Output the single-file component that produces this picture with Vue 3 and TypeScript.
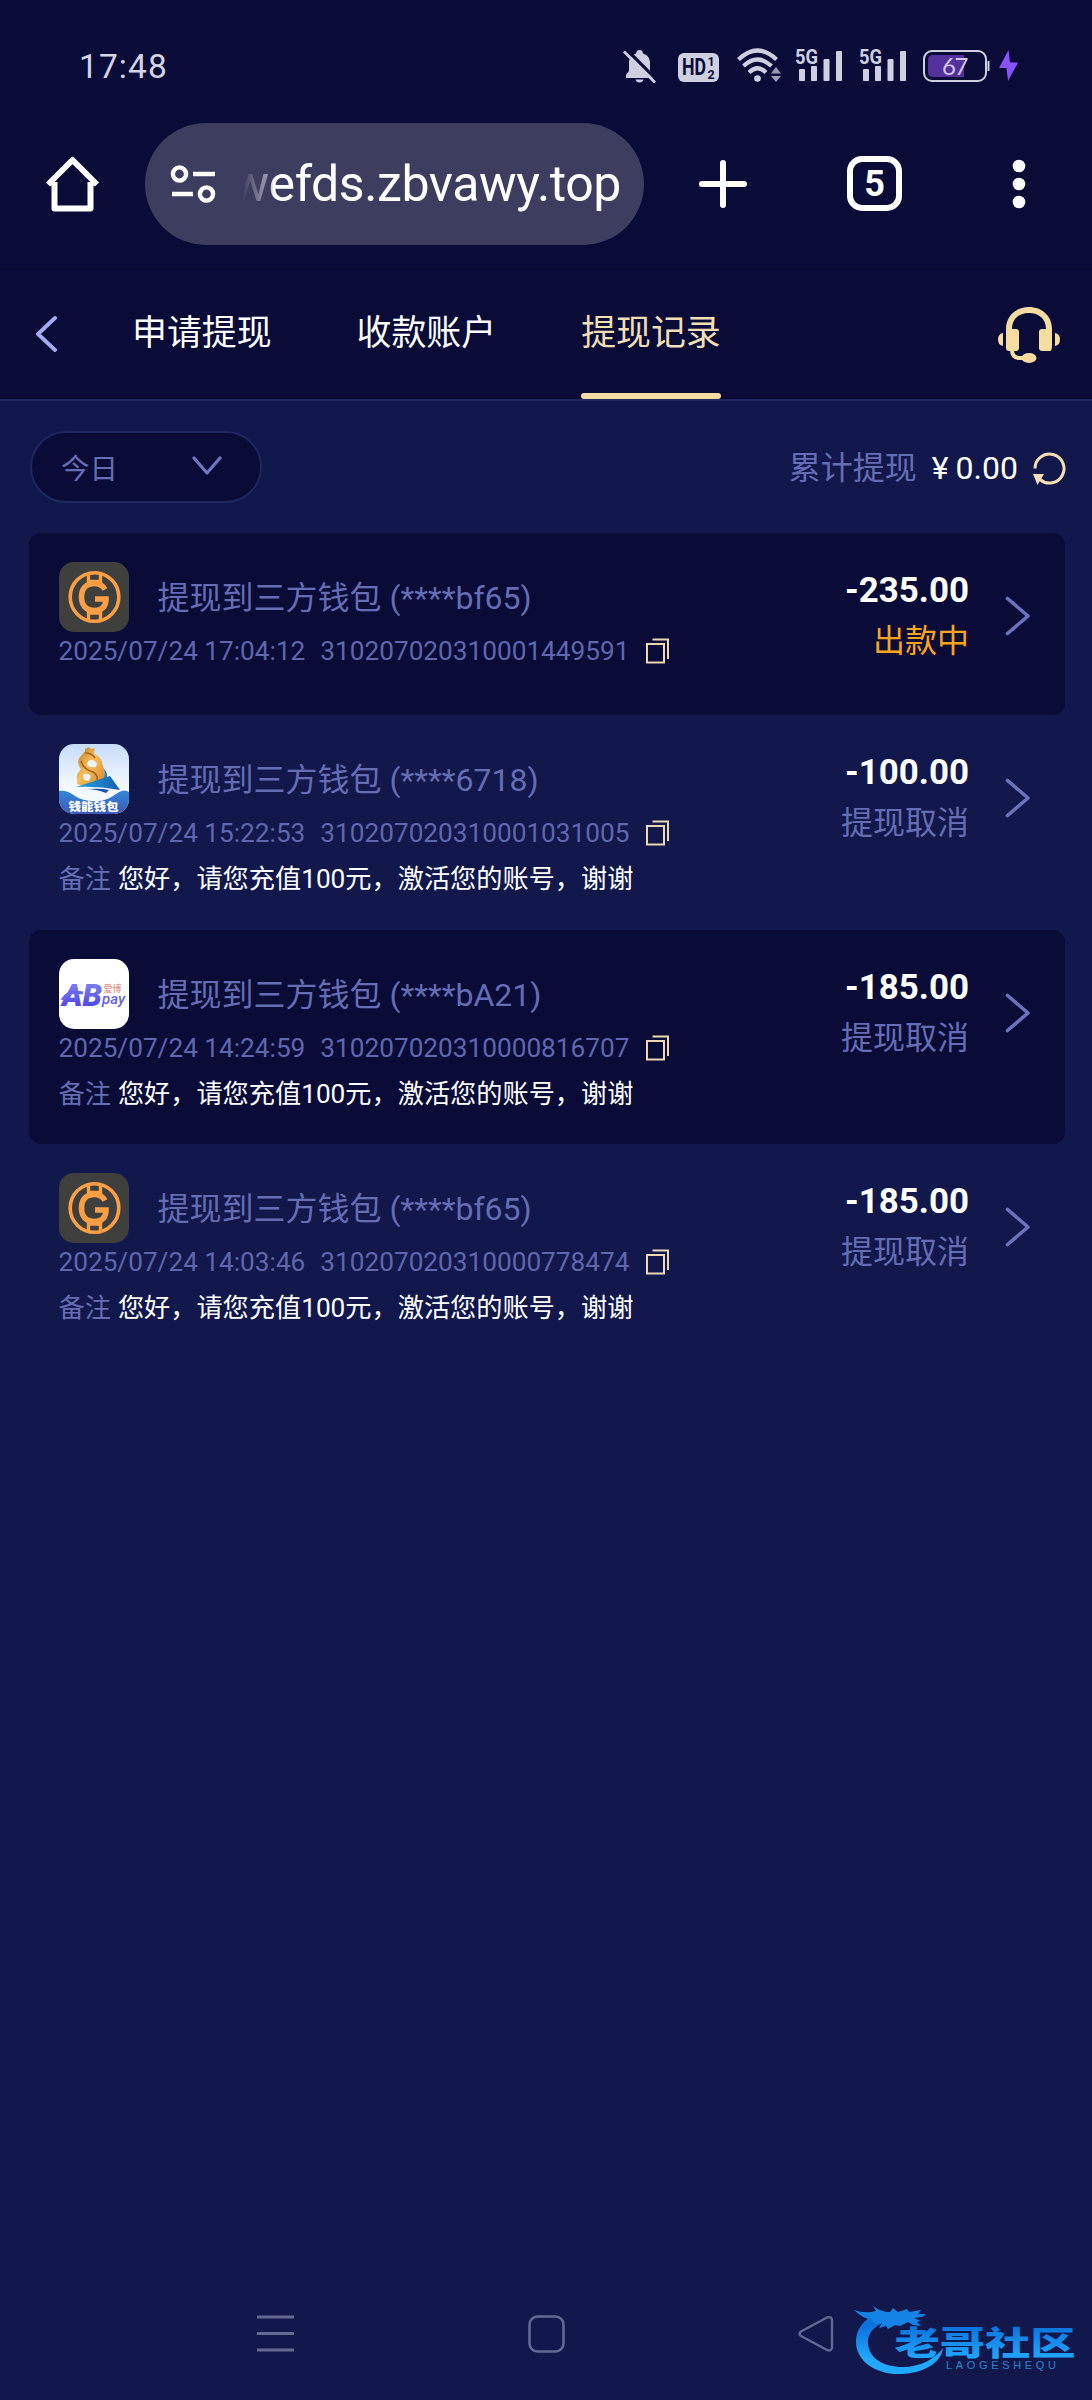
<script setup lang="ts">
interface WithdrawRecord {
  logo: 'coin' | 'boat' | 'ab'
  tail: string
  time: string
  order: string
  amount: string
  status: string
  pending?: boolean
  remark?: string
}

const tabs: string[] = ['申请提现', '收款账户', '提现记录']
const activeTab = 2
const remark = '您好，请您充值100元，激活您的账号，谢谢'

const records: WithdrawRecord[] = [
  { logo: 'coin', tail: 'bf65', time: '2025/07/24 17:04:12', order: '310207020310001449591', amount: '-235.00', status: '出款中', pending: true },
  { logo: 'boat', tail: '6718', time: '2025/07/24 15:22:53', order: '310207020310001031005', amount: '-100.00', status: '提现取消', remark },
  { logo: 'ab', tail: 'bA21', time: '2025/07/24 14:24:59', order: '310207020310000816707', amount: '-185.00', status: '提现取消', remark },
  { logo: 'coin', tail: 'bf65', time: '2025/07/24 14:03:46', order: '310207020310000778474', amount: '-185.00', status: '提现取消', remark },
]
</script>

<template>
  <div class="screen">
    <header class="status-bar">
      <span class="clock">17:48</span>
      <div class="status-icons">
        <svg class="bell" width="34" height="34" viewBox="0 0 34 34">
          <path d="M3 28v-3l3-4v-8c0-5 3-8 7-9.500c.5-2 1-3.500 3.500-3.500s3 1.500 3.500 3.500c4.500 1.500 7 4.500 7 9.500v8l3 4v3z" fill="#cfcfe2" />
          <path d="M12.500 29.500h8c-.5 2-2 3-4 3s-3.500-1-4-3z" fill="#cfcfe2" />
          <path d="M3 -1L36 32" stroke="#0a0b37" stroke-width="3.200" />
          <path d="M1 1.500L32 32.500" stroke="#cfcfe2" stroke-width="2.800" />
        </svg>
        <svg class="hd" width="41" height="29" viewBox="0 0 41 29">
          <rect width="41" height="29" rx="6" fill="#cfcfe2" />
          <text x="4" y="22" class="hd-text" textLength="24" lengthAdjust="spacingAndGlyphs">HD</text>
          <text x="29.500" y="13" class="hd-num">1</text>
          <text x="29.500" y="25.500" class="hd-num">2</text>
        </svg>
        <svg class="wifi" width="45" height="35" viewBox="0 0 45 35">
          <g fill="none" stroke="#cfcfe2" stroke-width="4.200">
            <path d="M1.500 11.500Q20.500-6.500 39.500 11.500" />
            <path d="M6.500 18Q20.500 5 34.500 18" />
            <path d="M12 24.500Q20.500 16 29 24.500" />
          </g>
          <circle cx="20.500" cy="30.500" r="3.300" fill="#cfcfe2" />
          <path d="M39 19l5 6.500h-10zM39 34l5-6h-10z" fill="#9c9cb8" />
        </svg>
        <svg v-for="n in 2" :key="n" class="signal" width="48" height="34" viewBox="0 0 48 34">
          <text x="0" y="15.500" class="net" textLength="23" lengthAdjust="spacingAndGlyphs">5G</text>
          <g fill="#cfcfe2">
            <rect x="4" y="21" width="6" height="12" rx="1" />
            <rect x="16" y="18" width="6" height="15" rx="1" />
            <rect x="28.500" y="11" width="6" height="22" rx="1" />
            <rect x="41" y="3" width="6" height="30" rx="1" />
          </g>
        </svg>
        <svg class="battery" width="68" height="33" viewBox="0 0 68 33">
          <rect x="1" y="1" width="62" height="30" rx="8" fill="none" stroke="#cfcfe2" stroke-width="2" />
          <path d="M10 5h31v22H10q-5 0-5-5V10q0-5 5-5z" fill="#53319b" />
          <path d="M65.500 11v10" stroke="#cfcfe2" stroke-width="2" />
          <text x="31.500" y="24.500" class="level" text-anchor="middle">67</text>
        </svg>
        <svg class="bolt" width="20" height="32" viewBox="0 0 20 32">
          <path d="M9.500 0L0 18h7.500L9 31l10-18.500h-8z" fill="#8a52fb" />
        </svg>
      </div>
    </header>

    <div class="browser-bar">
      <svg class="home" width="55" height="56" viewBox="0 0 55 56">
        <path d="M9.500 26V52.500H45.500V26M3 28.500L27.500 4L52 28.500" fill="none" stroke="#fff" stroke-width="6" stroke-linejoin="round" />
      </svg>
      <div class="address">
        <svg class="tune" width="46" height="38" viewBox="0 0 46 38" fill="none" stroke="#fff">
          <circle cx="9.500" cy="9" r="6.600" stroke-width="4.400" />
          <circle cx="36.500" cy="29" r="6.600" stroke-width="4.400" />
          <path d="M23 9h22M2 29h21" stroke-width="4.400" />
        </svg>
        <div class="url-clip"><span class="url">wefds.zbvawy.top</span></div>
      </div>
      <svg class="plus" width="48" height="48" viewBox="0 0 48 48">
        <path d="M24 3v42M3 24h42" stroke="#fff" stroke-width="6" stroke-linecap="round" />
      </svg>
      <div class="tab-count">5</div>
      <svg class="dots" width="14" height="50" viewBox="0 0 14 50" fill="#fff">
        <circle cx="7" cy="7" r="6.300" /><circle cx="7" cy="25" r="6.300" /><circle cx="7" cy="43" r="6.300" />
      </svg>
    </div>

    <nav class="page-nav">
      <svg class="back" width="22" height="36" viewBox="0 0 22 36">
        <path d="M20 2L3 18L20 34" fill="none" stroke="#a3aaf4" stroke-width="3.800" stroke-linecap="round" stroke-linejoin="round" />
      </svg>
      <div class="tabs">
        <span v-for="(tab, i) in tabs" :key="tab" class="tab" :class="{ active: i === activeTab }">{{ tab }}</span>
      </div>
      <svg class="service" width="62" height="56" viewBox="0 0 62 56">
        <g fill="#f5dca0">
          <path d="M8 38V22C8 9 18 0 31 0s23 9 23 22v16q0 6-2 6h-8q-3 0-3-3V25q0-3 3-3h4C48 12 41 6 31 6S14 12 14 22h4q3 0 3 3v16q0 3-3 3h-7q-3 0-3-3z" />
          <path d="M5 26v13Q0 38 0 32.500T5 26zM57 26v13q5-1 5-6.500T57 26z" />
          <ellipse cx="31" cy="51" rx="7.500" ry="5" />
        </g>
        <path d="M14 43q0 8 8 8h6" fill="none" stroke="#f5dca0" stroke-width="4" />
      </svg>
    </nav>

    <section class="filter">
      <div class="select">
        <span>今日</span>
        <svg width="30" height="20" viewBox="0 0 30 20">
          <path d="M2 2L15 17L28 2" fill="none" stroke="#6f76bd" stroke-width="3.200" stroke-linecap="round" stroke-linejoin="round" />
        </svg>
      </div>
      <div class="total">
        <span class="total-label">累计提现</span>
        <span class="yen">¥</span>
        <span class="total-value">0.00</span>
        <svg width="33" height="34" viewBox="0 0 33 34">
          <path d="M2 17.500A14.500 14.500 0 1 1 7 28.500" fill="none" stroke="#f3dfb3" stroke-width="3" />
          <path d="M0 23h11L4.500 34z" fill="#f3dfb3" />
        </svg>
      </div>
    </section>

    <main class="records">
      <article v-for="r in records" :key="r.order" class="record" :class="{ short: !r.remark }">
        <div class="info">
          <div class="head">
            <svg v-if="r.logo === 'coin'" class="logo" viewBox="0 0 70 70">
              <rect width="70" height="70" fill="#3f3f3e" />
              <g fill="none" stroke="#fa9f45">
                <circle cx="35.500" cy="35" r="24.300" stroke-width="3.600" />
                <path d="M46 27.500C43.500 23 40 21.500 35.500 21.500C27 21.500 22.500 27 22.500 35S27 48.500 35.500 48.500C42.500 48.500 47 45 47 37H36" stroke-width="5.600" />
                <path d="M29.500 12v10M41.500 12v10M29.500 48v10M41.500 48v10M29 19.500h13M29 51h13" stroke-width="3.400" />
              </g>
            </svg>
            <svg v-else-if="r.logo === 'boat'" class="logo" viewBox="0 0 70 70">
              <defs>
                <linearGradient id="sky" x1="0" y1="0" x2="0" y2="1"><stop offset="0" stop-color="#c5dcfa" /><stop offset=".6" stop-color="#f4f9ff" /></linearGradient>
                <linearGradient id="sea" x1="0" y1="0" x2="0" y2="1"><stop offset="0" stop-color="#3288da" /><stop offset="1" stop-color="#3f59b5" /></linearGradient>
                <linearGradient id="gold" x1="0" y1="0" x2="1" y2="1"><stop offset="0" stop-color="#b9782c" /><stop offset=".45" stop-color="#f7bd58" /><stop offset="1" stop-color="#d6882f" /></linearGradient>
                <linearGradient id="sail" x1="0" y1="0" x2="1" y2="0"><stop offset="0" stop-color="#20a6e4" /><stop offset="1" stop-color="#185fb0" /></linearGradient>
              </defs>
              <rect width="70" height="70" fill="url(#sky)" />
              <path d="M0 47q8-1 16 5t24 5q9-1 17-7t13-2v22H0z" fill="url(#sea)" />
              <path d="M38 21c8 3 11 7 10 13l-9 3z" fill="#2386cf" />
              <path d="M26 5l4-2 2 2 4-1-1 6c6 2 8 6 9 12l2 7c0 7-6 10-13 10l-9 3-6-2c1-4-2-9 2-12l2-3c-3-3-4-8-1-12l5-6z" fill="url(#gold)" />
              <path d="M29 17q5-3 9 2l-1 4q-6 1-9-2zM24 31q4-3 8 1l-2 5-5-1z" fill="#eef3f8" />
              <path d="M22 17q2 8 12 11q5 3 4 8M26 9q7 0 10 5" fill="none" stroke="#a4631d" stroke-width="1.600" />
              <path d="M17 43l34-11 10 14q-22-4-44-3z" fill="url(#sail)" />
              <path d="M27 45q15-1 23 1l-3 3q-10-4-20-4z" fill="#174fa4" />
              <text x="9.500" y="67" class="boat-name" textLength="50" lengthAdjust="spacingAndGlyphs">钱能钱包</text>
            </svg>
            <svg v-else class="logo" viewBox="0 0 70 70">
              <defs>
                <linearGradient id="ab" x1="0" y1="0" x2="0" y2="1"><stop offset="0" stop-color="#8d91ef" /><stop offset="1" stop-color="#3e36e5" /></linearGradient>
              </defs>
              <rect width="70" height="70" fill="#fff" />
              <text x="3" y="47" class="ab-name" fill="url(#ab)" textLength="40" lengthAdjust="spacingAndGlyphs">AB</text>
              <path d="M3 41Q9 31 24 34" fill="none" stroke="#6a68ea" stroke-width="3" />
              <text x="44.500" y="32.500" class="ab-cn">爱博</text>
              <text x="43" y="45" class="ab-pay" textLength="23" lengthAdjust="spacingAndGlyphs">pay</text>
            </svg>
            <span class="title">提现到三方钱包 (****{{ r.tail }})</span>
          </div>
          <div class="meta">
            <span class="time">{{ r.time }}</span>
            <span class="order">{{ r.order }}</span>
            <svg width="24" height="26" viewBox="0 0 24 26" fill="none" stroke="#ecd9b4" stroke-width="2">
              <rect x="1" y="6" width="17" height="18.500" />
              <path d="M6.500 1.500H22V21" />
            </svg>
          </div>
          <div v-if="r.remark" class="note"><span class="note-label">备注</span><span>{{ r.remark }}</span></div>
        </div>
        <div class="result">
          <span class="amount">{{ r.amount }}</span>
          <span class="state" :class="{ pending: r.pending }">{{ r.status }}</span>
        </div>
        <svg class="arrow" width="26" height="40" viewBox="0 0 26 40">
          <path d="M2.500 2.500L23 20L2.500 37.500" fill="none" stroke="#6b73bd" stroke-width="3.600" stroke-linecap="round" stroke-linejoin="round" />
        </svg>
      </article>
    </main>

    <footer class="system-nav">
      <svg width="37" height="38" viewBox="0 0 37 38"><path d="M0 2h37M0 18.500h37M0 35h37" stroke="#646993" stroke-width="3" /></svg>
      <svg width="38" height="38" viewBox="0 0 38 38"><rect x="2.500" y="1.500" width="34" height="35" rx="8" fill="none" stroke="#646993" stroke-width="2.600" /></svg>
      <svg width="36" height="38" viewBox="0 0 36 38"><path d="M3 16.500L29 2.500Q34 1 34 5.500V32Q34 36.500 29 35L3 21Q0 19 3 16.500z" fill="none" stroke="#646993" stroke-width="2.400" /></svg>
    </footer>

    <svg class="community" width="226" height="74" viewBox="0 0 226 74">
      <defs>
        <linearGradient id="brand" gradientUnits="userSpaceOnUse" x1="0" y1="22" x2="0" y2="56"><stop offset="0" stop-color="#0c72dc" /><stop offset="1" stop-color="#22a9ff" /></linearGradient>
      </defs>
      <path d="M36 8C14 9 2 22 2 38C2 57 22 71 47 70C70 69 87 59 89 44C81 55 66 63 49 63C29 63 15 54 14 40C13 28 22 19 40 16z" fill="url(#brand)" />
      <path d="M0 6q11 4 22 1l-3-5q8 6 17 6l3-4 5 4 9-3 2 3 12-2-3 4 8 0-4 3-8 1 7 3-4 1 4 4-8-1-5-3-8 4-5-1-7 4-2-3-7 2 3-5-6 1-5-5Q9 15 0 6z" fill="#1583e5" />
      <text x="40.500" y="51" class="brand-name" fill="url(#brand)" textLength="181" lengthAdjust="spacingAndGlyphs">老哥社区</text>
      <text x="92" y="65" class="brand-latin" textLength="110">LAOGESHEQU</text>
    </svg>
  </div>
</template>

<style>
body {
  background: #12184b;
}
</style>

<style scoped>
.screen {
  position: relative;
  display: flex;
  flex-direction: column;
  width: 1092px;
  height: 2400px;
  overflow: hidden;
  background: #12184b;
  color: #fff;
  font-family: Roboto, "Noto Sans CJK SC", sans-serif;
}
svg {
  display: block;
  flex: none;
}
.status-bar {
  display: flex;
  justify-content: space-between;
  height: 122px;
  padding: 48px 73px 0 79px;
  box-sizing: border-box;
  background: #0a0b37;
}
.clock {
  font-size: 33.500px;
  line-height: 38px;
  letter-spacing: 1.100px;
  color: #d3d3e6;
}
.status-icons {
  display: flex;
  align-items: flex-start;
}
.bell { margin: 2px 21px 0 0; }
.hd { margin: 5px 18px 0 0; }
.wifi { margin-right: 13px; }
.signal { margin-right: 16px; overflow: visible; }
.battery { margin: 2px 8px 0 0; }
.bolt { margin-top: 2px; }
.hd-text { font: 700 23px Roboto, sans-serif; fill: #0a0b37; }
.hd-num { font: 700 12.500px Roboto, sans-serif; fill: #0a0b37; }
.net { font: 700 20px Roboto, sans-serif; fill: #cfcfe2; }
.level { font: 400 24px Lato, sans-serif; letter-spacing: -1.5px; fill: #d2c5ee; }
.browser-bar {
  display: flex;
  align-items: center;
  height: 146px;
  padding: 0 66px 23px 45px;
  box-sizing: border-box;
  background: #0a0b37;
}
.address {
  display: flex;
  align-items: center;
  width: 500px;
  height: 122px;
  margin: 0 55px 0 45px;
  padding-left: 25px;
  box-sizing: border-box;
  border-radius: 61px;
  background: #3d3d60;
}
.url-clip {
  display: flex;
  justify-content: flex-end;
  width: 379px;
  margin-left: 26px;
  overflow: hidden;
  -webkit-mask-image: linear-gradient(90deg, transparent 0, rgba(0, 0, 0, 0.5) 26px, #000 32px);
  mask-image: linear-gradient(90deg, transparent 0, rgba(0, 0, 0, 0.5) 26px, #000 32px);
}
.url {
  font-size: 50px;
  line-height: 62px;
  letter-spacing: -0.4px;
}
.tab-count {
  display: flex;
  align-items: center;
  justify-content: center;
  width: 55px;
  height: 55px;
  margin: 0 110px 0 100px;
  box-sizing: border-box;
  border: 6px solid #fff;
  border-radius: 15px;
  font-size: 36px;
  font-weight: 700;
  line-height: 40px;
}
.page-nav {
  display: flex;
  align-items: center;
  height: 133px;
  padding: 0 32px 0 35px;
  box-sizing: border-box;
  border-top: 1px solid #08092d;
  border-bottom: 2px solid #20275f;
  background: #0a0b37;
}
.tabs {
  display: flex;
  gap: 85px;
  height: 130px;
  margin-left: 75px;
}
.tab {
  position: relative;
  height: 130px;
  font-size: 34.900px;
  line-height: 130px;
}
.tab.active {
  color: #f1dfb4;
}
.tab.active::after {
  content: "";
  position: absolute;
  right: 0;
  bottom: 0;
  left: 0;
  height: 6px;
  border-radius: 3px;
  background: #f5dca0;
}
.service {
  margin: 2px 0 0 auto;
}
.filter {
  display: flex;
  align-items: center;
  justify-content: space-between;
  height: 132px;
  padding: 0 26px 0 30px;
  box-sizing: border-box;
}
.select {
  display: flex;
  align-items: center;
  justify-content: space-between;
  width: 232px;
  height: 72px;
  padding: 0 38px 2px 29px;
  box-sizing: border-box;
  border: 2px solid #20275f;
  border-radius: 36px;
  background: #0a0b37;
  color: #656db5;
  font-size: 28.500px;
}
.total {
  display: flex;
  align-items: center;
  font-size: 32px;
  line-height: 40px;
  padding-top: 1px;
}
.total-label {
  color: #656db5;
}
.yen {
  margin: 0 7px 0 15px;
}
.total-value {
  margin-right: 15px;
}
.records {
  display: flex;
  flex-direction: column;
  margin: 0 27px 0 29px;
}
.record {
  display: flex;
  align-items: flex-start;
  height: 214.500px;
  padding: 29px 34px 0 29.500px;
  box-sizing: border-box;
  border-radius: 12px;
}
.record:nth-child(odd) {
  background: #0a0b37;
}
.record.short {
  height: 182px;
}
.head {
  display: flex;
  align-items: center;
  height: 70px;
}
.logo {
  width: 70px;
  height: 70px;
  border-radius: 15px;
}
.title {
  margin: 2px 0 0 29px;
  color: #656db5;
  font-size: 32px;
  line-height: 40px;
}
.meta {
  display: flex;
  align-items: center;
  height: 38px;
  color: #5f67af;
  font-size: 26.200px;
  line-height: 38px;
}
.order {
  margin: 0 19px 0 15px;
  width: 307px;
}
.note {
  margin-top: 7px;
  font-size: 26.200px;
  line-height: 40px;
}
.note-label {
  margin-right: 7px;
  color: #656db5;
}
.result {
  display: flex;
  flex-direction: column;
  align-items: flex-end;
  margin-left: auto;
  padding-top: 8px;
}
.amount {
  font-size: 34.900px;
  font-weight: 700;
  line-height: 41px;
}
.state {
  margin-top: 9px;
  color: #656db5;
  font-size: 32px;
  line-height: 42px;
}
.state.pending {
  color: #f9a51c;
}
.arrow {
  margin: 34px 0 0 36px;
}
.system-nav {
  display: flex;
  justify-content: space-between;
  width: 577px;
  margin: auto 0 47px 257px;
}
.community {
  position: absolute;
  left: 854px;
  top: 2304px;
}
.boat-name { font: 900 11px "Noto Sans CJK SC", sans-serif; fill: #fff; }
.ab-name { font: italic 900 32px Roboto, sans-serif; }
.ab-cn { font: 700 9px "Noto Sans CJK SC", sans-serif; fill: #e5a19c; }
.ab-pay { font: italic 500 15px Roboto, sans-serif; fill: #6462e2; }
.brand-name { font: 900 33px "Noto Sans CJK SC", sans-serif; }
.brand-latin { font: 400 11px "Liberation Sans", sans-serif; fill: #2387d2; }
</style>
